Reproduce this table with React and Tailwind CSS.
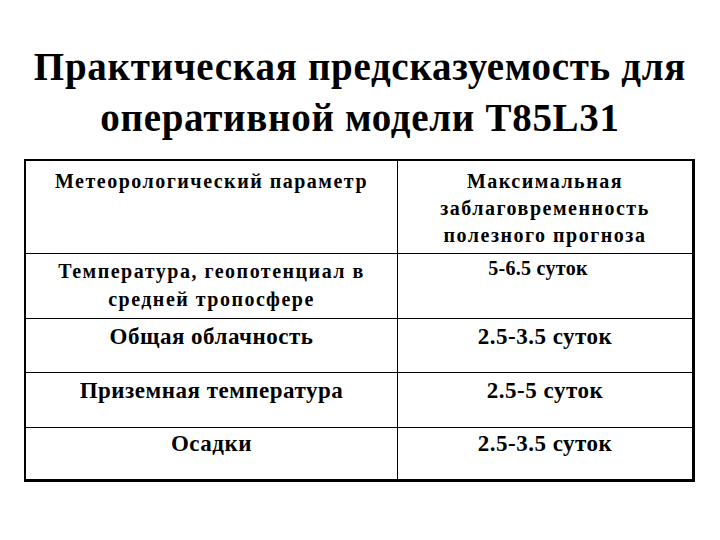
export default function App() {
  return (
    <div className="w-[720px] h-[540px] bg-white text-black overflow-hidden font-['Liberation_Serif','Times_New_Roman',serif]">
      <div className="pt-[41px] text-center font-bold text-[39px] leading-[51px] tracking-[0.7px]">
        <div>Практическая предсказуемость для</div>
        <div>оперативной модели T85L31</div>
      </div>
      <div className="mt-[16px] ml-[24px] w-[671px] border-l-2 border-t-2 border-r-[3px] border-b-[3px] border-black font-bold">
        <div className="flex h-[93px] border-b border-black">
          <div className="w-[372px] border-r border-black pt-[7px] text-center text-[20px] leading-[27px] tracking-[1.5px]">
            Метеорологический параметр
          </div>
          <div className="flex-1 pt-[7px] text-center text-[20px] leading-[27px] tracking-[1.5px]">
            <div>Максимальная</div>
            <div>заблаговременность</div>
            <div>полезного прогноза</div>
          </div>
        </div>
        <div className="flex h-[65px] border-b border-black">
          <div className="w-[372px] border-r border-black pt-[3px] text-center text-[20px] leading-[28px] tracking-[1.5px]">
            <div>Температура, геопотенциал в</div>
            <div>средней тропосфере</div>
          </div>
          <div className="flex-1 pt-[1px] pr-[14px] text-center text-[20px] leading-[27px] tracking-[0.3px]">
            5-6.5 суток
          </div>
        </div>
        <div className="flex h-[54px] border-b border-black">
          <div className="w-[372px] border-r border-black pt-[5px] text-center text-[23px] leading-[26px] tracking-[0.5px]">
            Общая облачность
          </div>
          <div className="flex-1 pt-[5px] text-center text-[23px] leading-[26px] tracking-[0.5px]">
            2.5-3.5 суток
          </div>
        </div>
        <div className="flex h-[55px] border-b border-black">
          <div className="w-[372px] border-r border-black pt-[5px] text-center text-[23px] leading-[26px] tracking-[0.5px]">
            Приземная температура
          </div>
          <div className="flex-1 pt-[5px] text-center text-[23px] leading-[26px] tracking-[0.5px]">
            2.5-5 суток
          </div>
        </div>
        <div className="flex h-[51px]">
          <div className="w-[372px] border-r border-black pt-[3px] text-center text-[23px] leading-[26px] tracking-[0.5px]">
            Осадки
          </div>
          <div className="flex-1 pt-[3px] text-center text-[23px] leading-[26px] tracking-[0.5px]">
            2.5-3.5 суток
          </div>
        </div>
      </div>
    </div>
  );
}
